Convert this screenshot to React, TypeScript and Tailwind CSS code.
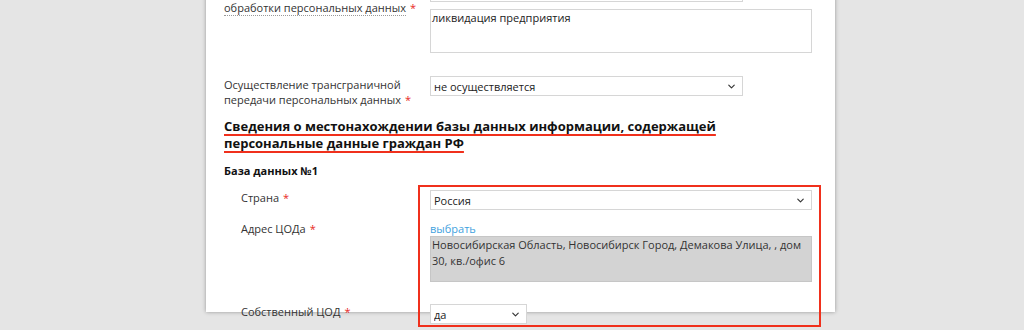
import { ChevronDown } from 'lucide-react';

const font = { fontFamily: '"Open Sans", "Liberation Sans", sans-serif' };

function Star() {
    return <span className="text-[#e8281c] ml-1">*</span>;
}

function Select({ value, width }: { value: string; width: string }) {
    return (
        <div className={`relative h-5 ${width}`}>
            <select
                defaultValue={value}
                className="appearance-none w-full h-full border border-[#d6d6d6] bg-white pl-[3px] pr-6 text-[11px] text-[#222] outline-none"
                style={font}
            >
                <option>{value}</option>
            </select>
            <ChevronDown
                size={11}
                strokeWidth={2.5}
                className="absolute right-[6px] top-[5px] text-[#333] pointer-events-none"
            />
        </div>
    );
}

export default function App() {
    return (
        <div className="h-[330px] overflow-hidden bg-[#e5e5e5] pl-[206px]" style={font}>
            <div className="w-[629px] h-full bg-white shadow-[0_0_4px_rgba(0,0,0,0.35)] pl-[18px] text-[11px] leading-[15px] text-[#333]">
                {/* row above, mostly scrolled out */}
                <div className="flex -mt-[18px]">
                    <div className="w-[206px] shrink-0" />
                    <div className="w-[313px] h-5 border border-[#d6d6d6]" />
                </div>

                {/* Условия прекращения */}
                <div className="flex mt-[7px]">
                    <div className="w-[206px] shrink-0 -mt-[9px]">
                        <span className="border-b border-dotted border-[#999]">обработки персональных данных</span>
                        <Star />
                    </div>
                    <textarea
                        defaultValue="ликвидация предприятия"
                        className="w-[382px] h-[44px] border border-[#d6d6d6] px-[1px] py-0 text-[11px] leading-[15px] text-[#222] resize-none outline-none"
                        style={font}
                    />
                </div>

                {/* Трансграничная передача */}
                <div className="flex mt-[24px]">
                    <div className="w-[206px] shrink-0">
                        Осуществление трансграничной
                        <br />
                        передачи персональных данных
                        <Star />
                    </div>
                    <Select value="не осуществляется" width="w-[313px] -mt-[1px]" />
                </div>

                <h2 className="mt-[11px] text-[13px] leading-[17px] font-bold text-[#111] w-[520px] underline decoration-[#f0301c] decoration-2 underline-offset-[3px]">
                    Сведения о местонахождении базы данных информации, содержащей персональные данные граждан РФ
                </h2>

                <div className="mt-[11px] font-bold text-[#111]">База данных №1</div>

                <div className="relative mt-[12px] pl-[17px]">
                    {/* annotation frame */}
                    <div className="absolute left-[194px] -top-[5px] w-[403px] h-[142px] border-2 border-[#f0301c] pointer-events-none" />

                    <div className="flex">
                        <div className="w-[189px] shrink-0">
                            Страна
                            <Star />
                        </div>
                        <Select value="Россия" width="w-[382px]" />
                    </div>

                    <div className="flex mt-[11px]">
                        <div className="w-[189px] shrink-0">
                            Адрес ЦОДа
                            <Star />
                        </div>
                        <div className="w-[382px]">
                            <a className="block text-[#3fa2de] leading-[15px]">выбрать</a>
                            <div className="h-[46px] bg-[#d3d3d3] border border-[#c6c6c6] px-[1px] text-[#333] leading-[16px]">
                                Новосибирская Область, Новосибирск Город, Демакова Улица, , дом 30, кв./офис 6
                            </div>
                        </div>
                    </div>

                    <div className="flex mt-[22px]">
                        <div className="w-[189px] shrink-0">
                            Собственный ЦОД
                            <Star />
                        </div>
                        <Select value="да" width="w-[97px]" />
                    </div>
                </div>
            </div>
        </div>
    );
}
